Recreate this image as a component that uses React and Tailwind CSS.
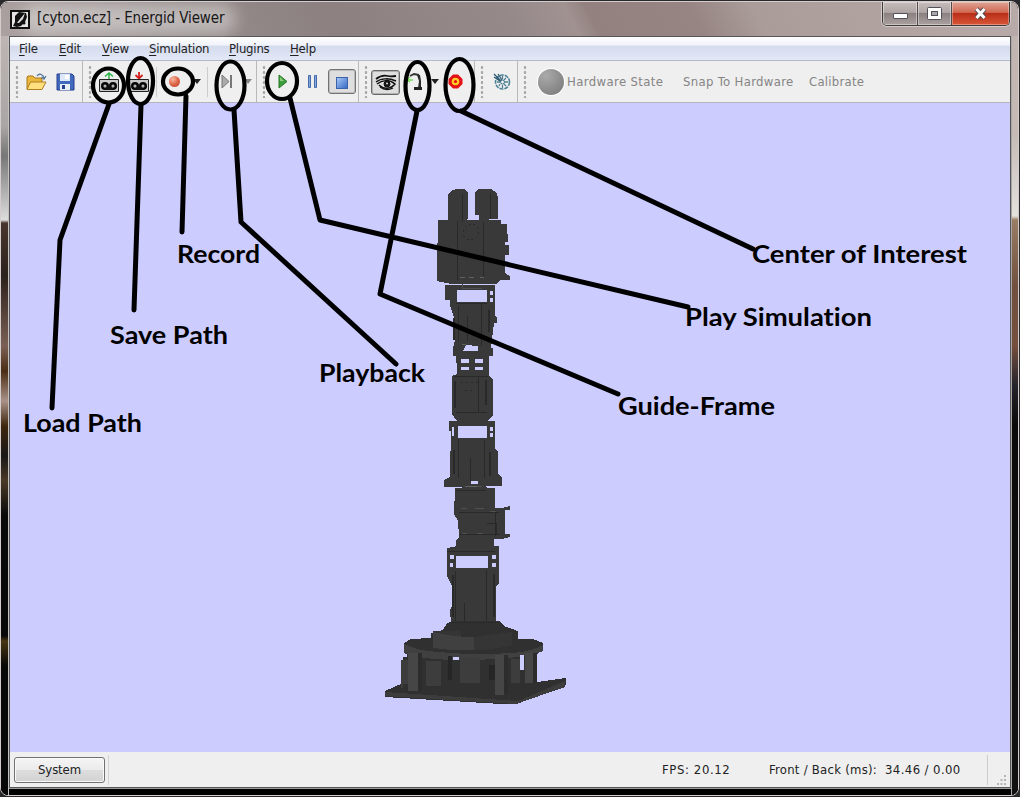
import React from "react";

const Grip = () => (
  <div className="ml-[5px] h-[33px] w-[4px] shrink-0 bg-[radial-gradient(circle,#aaaaaa_1.1px,transparent_1.6px)] bg-[length:4px_5px]" />
);

const Section = ({ className = "", children }) => (
  <div className={"flex h-full shrink-0 items-center border-r border-[#b9b9b9] " + className}>
    <Grip />
    {children}
  </div>
);

const Arrow = ({ className = "", fill = "#222" }) => (
  <svg className={"shrink-0 " + className} width="8" height="5" viewBox="0 0 8 5">
    <path d="M0 0h8L4 5z" fill={fill} />
  </svg>
);

const FolderIcon = () => (
  <svg className="ml-[7px] shrink-0" width="21" height="18" viewBox="0 0 21 18">
    <path d="M1 16V4l1-1h5l2 2h6l1 1v10z" fill="#e9b73c" stroke="#a9771d" />
    <path d="M1 16.5L4.5 9H20l-4 7.5z" fill="#ffdf7e" stroke="#b07f22" />
    <path d="M11 3c2-3 6-2 7 2m-2.500-1L18 6l2-3" fill="none" stroke="#55799a" strokeWidth="1.300" />
  </svg>
);

const SaveIcon = () => (
  <svg className="ml-[9px] shrink-0" width="19" height="18" viewBox="0 0 19 18">
    <path d="M1 1h15l2 2v14H1z" fill="#4169bd" stroke="#263f8e" />
    <path d="M4 1h10v7H4z" fill="#dde9fa" />
    <path d="M9 2h4v4H9z" fill="#fff" />
    <path d="M4 11h10v6H4z" fill="#e9eef6" />
    <path d="M6 12h3v4H6z" fill="#263f8e" />
  </svg>
);

const TapeIcon = ({ up, className }) => (
  <svg className={"shrink-0 " + className} width="20" height="20" viewBox="0 0 20 20">
    {up ? (
      <path d="M10 7V1M6 4.500L10 1l4 3.500" fill="none" stroke="#2fb44a" strokeWidth="1.500" />
    ) : (
      <path d="M10 0v6M6.500 3L10 6.500 13.500 3" fill="none" stroke="#d32020" strokeWidth="1.800" />
    )}
    <path d="M.5 7.500h19v12H.5z" fill="#c9c9c9" stroke="#222" />
    <circle cx="6" cy="14" r="4" fill="#050505" />
    <circle cx="14" cy="14" r="4" fill="#050505" />
    <path d="M6 15h8v3H6z" fill="#111" />
    <circle cx="6" cy="14" r="1.500" fill="#ddd" />
    <circle cx="14" cy="14" r="1.500" fill="#ddd" />
    <circle cx="6" cy="14" r=".6" fill="#222" />
    <circle cx="14" cy="14" r=".6" fill="#222" />
  </svg>
);

const EyeIcon = () => (
  <svg width="22" height="18" viewBox="0 0 22 18" fill="none" stroke="#111">
    <path d="M1 6C6 2 9 2 13 3s5 0 8 0" strokeWidth="1.800" />
    <path d="M1 9C6 5 14 5 21 8M2 11c5-4 12-5 18 0-4 5-11 6-16 1" strokeWidth="1.500" />
    <circle cx="12" cy="11" r="3" fill="#111" />
    <path d="M5 14c4 3 9 3 13 1" strokeWidth="1.200" />
    <circle cx="12" cy="10.500" r="1" fill="#ddd" stroke="none" />
  </svg>
);

const GuideIcon = () => (
  <svg className="ml-[6px] shrink-0" width="18" height="20" viewBox="0 0 18 20">
    <path d="M0 8h7M4 5L1 8l3 2" stroke="#7be05f" strokeWidth="1.300" fill="none" />
    <path d="M4 4l4-2 5 1" stroke="#333" strokeWidth="1.800" fill="none" />
    <path d="M11 3h3l1 6v7h-3l1-7z" fill="#2a2a2a" />
    <path d="M8 15h8v3H8z" fill="#222" />
  </svg>
);

const CompassIcon = () => (
  <svg className="ml-[9px] shrink-0" width="18" height="18" viewBox="0 0 18 18" fill="none">
    <circle cx="9.500" cy="9" r="7" stroke="#4d8296" strokeWidth="1.600" strokeDasharray="4 1" />
    <path d="M9.500 3v3M9.500 12v3M12 9h3M4 9h3M6 13l1-2M13 5l-2 2M13 13l-2-2" stroke="#4d8296" strokeWidth="1.300" />
    <path d="M1 1l8 8M1 4l6 4M5 1l4 6" stroke="#29566e" strokeWidth="1.200" />
    <circle cx="9.500" cy="9" r="2" fill="#e8f3f7" stroke="#426f83" />
  </svg>
);

const TitleBar = () => (
  <div className="relative flex h-[35px] items-start bg-[linear-gradient(64deg,#aaa1a0_0%,#958c8b_18%,#8c8180_33%,#96898a_50%,#a09291_56%,#93817f_58%,#978583_68%,#a99c99_74%,#b7aaa8_100%)] pl-[9px]">
    <div className="absolute left-[20px] top-[3px] h-[30px] w-[215px] rounded-full bg-white/40 blur-[8px]" />
    <svg className="relative mt-[9px]" width="20" height="19" viewBox="0 0 20 19">
      <path d="M0 0h20v19H0z" fill="#111" />
      <path d="M2 2h16v15H2z" fill="#e4e4e4" />
      <path d="M3 16l2-4V6l4-4 7 1 1 4-2 5-4 4-4 1z" fill="#111" />
      <path d="M7 13l3-4 5-6-2 6-4 4z" fill="#ddd" />
      <circle cx="14" cy="13" r="1.500" fill="#111" />
    </svg>
    <div className="relative ml-[7px] mt-[8px] whitespace-nowrap text-[15px] leading-[19px] tracking-[-0.1px] text-[#171717]">
      [cyton.ecz] - Energid Viewer
    </div>
    <div className="ml-auto mr-[8px] mt-[1px] flex h-[24px] w-[128px] overflow-hidden rounded-b-[5px] border border-t-0 border-[#403c3c] shadow-[0_0_0_1px_#d4cac8]">
      <div className="flex w-[35px] items-center justify-center border-r border-[#504a4a] bg-[linear-gradient(#c5bcbb_0%,#afa5a4_45%,#8c8181_50%,#aaa09f_100%)] shadow-[inset_0_0_0_1px_#ffffff66]">
        <div className="mt-[5px] h-[6px] w-[15px] rounded-[1px] border border-[#51515b] bg-white" />
      </div>
      <div className="flex w-[34px] items-center justify-center border-r border-[#504a4a] bg-[linear-gradient(#c5bcbb_0%,#afa5a4_45%,#8c8181_50%,#aaa09f_100%)] shadow-[inset_0_0_0_1px_#ffffff66]">
        <svg width="15" height="13" viewBox="0 0 15 13">
          <rect x=".5" y=".5" width="14" height="12" rx="1" fill="#fff" stroke="#51515b" />
          <rect x="4.500" y="4.500" width="6" height="4" fill="#aaa" stroke="#51515b" />
        </svg>
      </div>
      <div className="flex flex-1 items-center justify-center bg-[linear-gradient(#dda394_0%,#d26953_45%,#b92f18_50%,#d95637_100%)] shadow-[inset_0_0_0_1px_#ffffff55]">
        <svg width="15" height="13" viewBox="0 0 15 13">
          <path d="M3.500 2l8 9M11.500 2l-8 9" stroke="#59484d" strokeWidth="5" />
          <path d="M3.500 2l8 9M11.500 2l-8 9" stroke="#fff" strokeWidth="3" />
        </svg>
      </div>
    </div>
  </div>
);

const menus = [
  ["File", "w-[40px]"],
  ["Edit", "w-[43px]"],
  ["View", "w-[47px]"],
  ["Simulation", "w-[80px]"],
  ["Plugins", "w-[61px]"],
  ["Help", "w-[40px]"],
];

const MenuBar = () => (
  <div className="flex h-[24px] shrink-0 items-center border-b border-[#b4bacb] bg-[linear-gradient(#ffffff_0%,#f0f3fa_35%,#d4dbed_40%,#e2e8f6_100%)] pl-[9px] text-[13px] tracking-[-0.2px] text-[#222]">
    {menus.map(([m, w]) => (
      <div key={m} className={"whitespace-nowrap " + w}>
        <span className="underline underline-offset-2">{m[0]}</span>
        {m.slice(1)}
      </div>
    ))}
  </div>
);

const Toolbar = () => (
  <div className="flex h-[42px] shrink-0 items-center border-b border-[#b5b3bd] bg-[#efefef] text-[13px]">
    <Section className="w-[73px]">
      <FolderIcon />
      <SaveIcon />
    </Section>
    <Section className="w-[174px]">
      <TapeIcon up className="ml-[7px]" />
      <TapeIcon className="ml-[10px]" />
      <div className="ml-[7px] h-[30px] w-px bg-[#cccccc]" />
      <div className="ml-[12px] h-[11px] w-[11px] rounded-full bg-[radial-gradient(circle_at_35%_30%,#f7b9a1,#dd6547_50%,#bd3d25)]" />
      <Arrow className="ml-[13px]" />
      <div className="ml-[6px] h-[30px] w-px bg-[#cccccc]" />
      <svg className="ml-[13px] shrink-0" width="12" height="15" viewBox="0 0 12 15">
        <path d="M1 1l7 6.500L1 14z" fill="#aaa" stroke="#777" />
        <path d="M9 1h2v13H9z" fill="#777" />
      </svg>
      <Arrow className="ml-[11px]" fill="#888" />
    </Section>
    <Section className="w-[102px]">
      <svg className="ml-[12px] shrink-0" width="10" height="15" viewBox="0 0 10 15">
        <path d="M1 1l8 6.500L1 14z" fill="#3f9e3c" stroke="#26762a" />
        <path d="M2 3l4 4H2z" fill="#8acf78" />
      </svg>
      <svg className="ml-[20px] shrink-0" width="9" height="13" viewBox="0 0 9 13">
        <path d="M.5.500h2v12h-2zM6.500.500h2v12h-2z" fill="#83a9e0" stroke="#4269aa" />
      </svg>
      <div className="ml-[11px] flex h-[25px] w-[28px] shrink-0 items-center justify-center rounded-[3px] border border-[#737373] bg-[#dedede] shadow-[inset_0_0_0_1px_#bdbdbd]">
        <div className="mt-[2px] h-[12px] w-[12px] border border-[#3c62ac] bg-[linear-gradient(135deg,#a4c6f5,#386bc5)]" />
      </div>
    </Section>
    <Section className="w-[116px]">
      <div className="ml-[3px] mt-[1px] flex h-[25px] w-[29px] shrink-0 items-center justify-center rounded-[3px] border border-[#686868] bg-[#dedede] shadow-[inset_0_0_0_1px_#b2b2b2]">
        <EyeIcon />
      </div>
      <GuideIcon />
      <Arrow className="ml-[7px]" />
      <svg className="ml-[9px] shrink-0" width="15" height="15" viewBox="0 0 15 15">
        <path d="M5 .5h5L14.500 5v5L10 14.500H5L.5 10V5z" fill="#e41214" />
        <circle cx="7.500" cy="7.500" r="3.800" fill="#ffcd27" />
        <circle cx="7.500" cy="7.500" r="1.600" fill="#e41214" />
      </svg>
    </Section>
    <Section className="w-[43px]">
      <CompassIcon />
    </Section>
    <div className="flex items-center text-[#858585]">
      <Grip />
      <div className="ml-[11px] h-[26px] w-[26px] rounded-full bg-[radial-gradient(circle_at_30%_25%,#aaaaaa,#8d8d8d_55%,#777777)] shadow-[0_0_1px_1px_white]" />
      <div className="ml-[3px] w-[116px] whitespace-nowrap tracking-[0.38px]">Hardware State</div>
      <div className="w-[126px] whitespace-nowrap tracking-[0.33px]">Snap To Hardware</div>
      <div className="whitespace-nowrap tracking-[0.25px]">Calibrate</div>
    </div>
  </div>
);

const Robot = () => (
  <svg className="block" width="1000" height="649" viewBox="10 103 1000 649" shapeRendering="crispEdges">
    <g fill="#393939">
      <path d="M448 221V194l3-3 5-2h8l4 3v26l-2 4zM475 219v-27l4-3h12l5 3 2 5v22h-9v2h-10v-6h-4z" />
      <path d="M438 220h63v4h6v10h1v8h-3v3h4v10h-4v18l5 3v4h-9l-5 4h-45l-14-3V243h1v-22z" />
      <path fillRule="evenodd" d="M445 285h50v30l2 3v5h-3l-3 25h2v8h-40v-8l2-8-1-23-4-11v-6h-5zM457 290v12h30v-12zM490 291v4h3v-4zM490 298v4h3v-4zM466 345l-3 6h15v-5z" />
      <path fillRule="evenodd" d="M456 352h33v24l4 3v36l-6 6h-30l-5-7v-38l5-2zM461 359v4h8v-4zM475 359v4h8v-4zM461 367v3h8v-3zM475 367v3h8v-3z" />
      <path fillRule="evenodd" d="M449 421h46v28l3 2v22l4 5v8h-16l-8-2v-3h-7v4l-10 2h-17v-7l6-3v-21l1-10v-15h-2zM458 426v12h29v-12zM490 427v4h3v-4zM490 433v4h3v-4zM452 427v9h2v-9z" />
      <path d="M455 488h6l5-4h16l6 4h7v20h7l8-2v4h-5v24h5v3l-8 2h-8v11h-38v-10l3-3-1-16-4-7z" />
      <path fillRule="evenodd" d="M447 548l10-2h42v37l-3 4v34l6 4v8h-56v-8l5-2-1-13 2-4v-20l-5-10zM456 556v12h32v-12zM450 555v4h4v-4zM450 563v4h3v-4zM492 555v4h4v-4zM492 563v4h4v-4zM466 623v2h9v-2z" />
    </g>
    <path d="M385 691l18-8v-26h4v-5l-3-5v-4l7-4 20-1v-5l12-3 4-7 7-2h45l7 6 12 4v8h15l10 4v7l-6 4v28l29-4v7l-31 12-18 7h-16l-116-7z" fill="#303030" />
    <path d="M433 631h28v18h-28z" fill="#353535" />
    <path d="M433 632q40 10 79 0v13q-38 9-79 3z" fill="#404040" />
    <path d="M474 637l38-5v13q-18 5-38 5z" fill="#353535" />
    <path d="M404 644q14 7 34 8 45 4 84 0 14-3 21-7v6q-14 6-36 7-45 4-83 0-12-1-20-5z" fill="#404040" />
    <path d="M401 660h7v24h-5v4h-2zM426 661h15v25h-15zM460 657h20v26h-20zM511 659h9v24h-9z" fill="#3d3d3d" />
    <path d="M448 656h4v24h-4zM489 665h6v15h-6z" fill="#252525" />
    <path d="M408 653h14v38h-14zM495 655h12v40h-12zM525 653h11v30h-11z" fill="#464646" />
    <path d="M418 653h4v38h-4zM504 655h4v40h-4zM533 653h4v30h-4z" fill="#2c2c2c" />
    <path d="M453 657h6v3h-6zM520 655h4v15h-4z" fill="#ccccff" />
    <path d="M385 692l133 9 47-20v6l-49 17-131-8z" fill="#3c3c3c" />
    <g fill="none" stroke="#292929">
      <path d="M457 221v59M483 222v56M462 194v28M490 193v26M456 303h31M458 306v35M481 303v43M467 316v25M454 376h34M478 376v36M456 412h31" />
      <path d="M458 439v39M484 440v38M470 458v24M456 490h30M459 512h40M460 534h40M495 510v26M487 523h9v11M455 571v50M486 570v51M464 603v20M449 622h47M447 551h48" />
      <path d="M454 318v22M489 310v22M455 381v27M486 380v25M490 452v24M454 450v24M494 574v43M453 575v42" strokeWidth="2" />
      <path d="M462 284v4h20M465 486h17M461 508h6M475 508h9M490 511h6M462 533h5M477 533h6" stroke="#505050" />
      <circle cx="471" cy="232" r="8" strokeDasharray="2 3" />
      <path d="M461 382h17M465 390h10" strokeDasharray="2 3" />
    </g>
    <path d="M460 277h5M469 277h5M480 277h4M462 344h4M465 486h12" stroke="#626262" strokeWidth="1" />
  </svg>
);

const callouts = [
  ["Load Path", 23, 432, 119],
  ["Save Path", 110, 344, 118],
  ["Record", 177, 263, 83],
  ["Playback", 319, 382, 106],
  ["Guide-Frame", 618, 415, 157],
  ["Play Simulation", 685, 326, 187],
  ["Center of Interest", 752, 263, 215],
];

const Annotations = () => (
  <svg className="pointer-events-none absolute left-0 top-0" width="1020" height="797" viewBox="0 0 1020 797">
    <g fill="none" stroke="#000" strokeWidth="4.200" strokeLinecap="round" strokeLinejoin="round">
      <ellipse cx="108.500" cy="85.500" rx="15.500" ry="17" />
      <ellipse cx="140.500" cy="81" rx="12.500" ry="23" />
      <ellipse cx="178" cy="81.500" rx="15" ry="13" />
      <ellipse cx="230.500" cy="85.500" rx="14" ry="24" />
      <ellipse cx="282" cy="81" rx="15" ry="18" />
      <ellipse cx="417.500" cy="86" rx="12" ry="24" />
      <ellipse cx="459.500" cy="85" rx="14" ry="26" />
      <path strokeWidth="5" d="M109 104L60 240 52 408M141 105l-7 205M186 96l-4 136M234 110l7 112 155 142M290 98l30 122 368 87M417 111l-37 183 238 100M461 111l292 138" />
    </g>
    <g fill="#000" className="font-['Lato'] text-[25px] font-bold [font-variant-ligatures:none]">
      {callouts.map(([t, x, y, w]) => (
        <text key={t} x={x} y={y} textLength={w} lengthAdjust="spacingAndGlyphs">
          {t}
        </text>
      ))}
    </g>
  </svg>
);

const StatusBar = () => (
  <div className="relative flex h-[35px] shrink-0 items-center bg-[#efefef] pl-[4px] text-[13px] tracking-[0.25px] text-[#222]">
    <div className="flex h-[26px] w-[91px] items-center justify-center rounded-[3px] border border-[#707070] bg-[linear-gradient(#f5f5f5_0%,#ebebeb_50%,#dddddd_52%,#d2d2d2_100%)] tracking-[-0.1px] shadow-[inset_0_0_0_1px_#fafafa]">
      System
    </div>
    <div className="ml-[3px] h-[30px] w-px bg-[#d2d2d2]" />
    <div className="ml-[553px] w-[107px] whitespace-nowrap tracking-[0.6px]">FPS: 20.12</div>
    <div className="w-[116px] whitespace-nowrap">Front / Back (ms):</div>
    <div className="w-[102px] whitespace-nowrap tracking-[0.4px]">34.46 / 0.00</div>
    <div className="h-[30px] w-px bg-[#cccccc]" />
    <svg className="absolute bottom-[2px] right-[3px]" width="10" height="10" viewBox="0 0 10 10">
      <path d="M7 0h2v2H7zM3.500 4h2v2h-2zM7 4h2v2H7zM0 8h2v2H0zM3.500 8h2v2h-2zM7 8h2v2H7z" fill="#b5b5b5" />
    </svg>
  </div>
);

export default function App() {
  return (
    <div className="relative h-[797px] w-[1020px] overflow-hidden bg-[#29292b] pt-px font-['DejaVu_Sans_Condensed','DejaVu_Sans',sans-serif] [font-stretch:condensed]">
      <div className="flex h-[795px] w-[1019px] flex-col overflow-hidden rounded-[8px] border border-[#d4cdcb] bg-black">
        <div className="-mt-px shrink-0">
          <TitleBar />
        </div>
        <div className="flex min-h-0 flex-1">
          <div className="w-[8px] shrink-0 border-r border-[#c5c1bf] bg-[linear-gradient(#bdb5b3_0px,#aaa6a5_90px,#777777_120px,#dddddd_184px,#49352f_187px,#2c221c_240px,#7b6055_310px,#4b2d14_335px,#a99188_365px,#3f260d_390px,#1a1919_420px,#4a3a28_445px,#0a0a0a_480px,#080808_600px,#493611_605px,#080808_630px)]" />
          <div className="flex h-[752px] w-[1002px] shrink-0 flex-col border border-[#555555] shadow-[0_1px_0_#9a9a9a]">
            <div className="flex h-[750px] flex-col bg-white">
              <MenuBar />
              <Toolbar />
              <div className="h-[649px] min-h-0 flex-1 overflow-hidden bg-[#ccccff]">
                <Robot />
              </div>
              <StatusBar />
            </div>
          </div>
          <div className="flex-1 border-l border-[#aaa8a5] bg-[linear-gradient(#c2b4b0_0px,#c6bbb7_100px,#e4e1dd_180px,#997d65_184px,#71503f_250px,#754e3e_310px,#24232b_350px,#090909_390px,#111111_750px)]" />
        </div>
      </div>
      <Annotations />
    </div>
  );
}
